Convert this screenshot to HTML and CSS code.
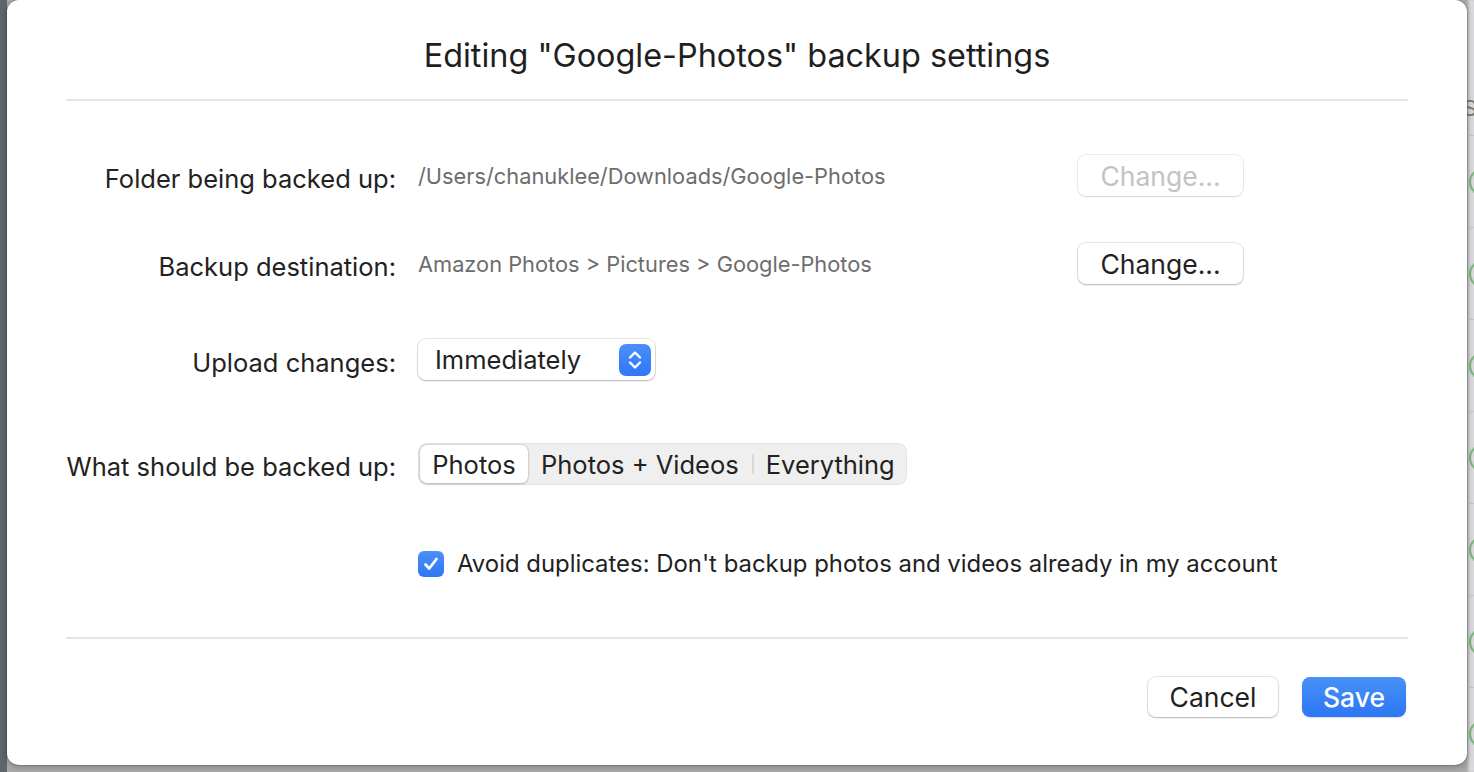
FILE: index.html
```html
<!DOCTYPE html>
<html lang="en">
<head>
    <meta charset="UTF-8">
    <title>Editing backup settings</title>
    <link rel="stylesheet" href="styles.css">
</head>
<body>
    <div class="desk">
        <div class="side-left"></div>

        <div class="sheet">
            <div class="sheet-head">
                <h1>Editing "Google-Photos" backup settings</h1>
            </div>

            <div class="form">
                <div class="row row-folder">
                    <div class="label">Folder being backed up:</div>
                    <div class="value">/Users/chanuklee/Downloads/Google-Photos</div>
                    <button class="btn btn-disabled">Change...</button>
                </div>

                <div class="row row-dest">
                    <div class="label">Backup destination:</div>
                    <div class="value">Amazon Photos &gt; Pictures &gt; Google-Photos</div>
                    <button class="btn">Change...</button>
                </div>

                <div class="row row-upload">
                    <div class="label">Upload changes:</div>
                    <div class="field">
                        <div class="popup">
                            <span>Immediately</span>
                            <span class="stepper">
                                <svg width="20" height="24" viewBox="0 0 20 24">
                                    <path d="M5 9.5 L10 4.5 L15 9.5" fill="none" stroke="#fff" stroke-width="2.4" stroke-linecap="round" stroke-linejoin="round"/>
                                    <path d="M5 14.5 L10 19.5 L15 14.5" fill="none" stroke="#fff" stroke-width="2.4" stroke-linecap="round" stroke-linejoin="round"/>
                                </svg>
                            </span>
                        </div>
                    </div>
                </div>

                <div class="row row-what">
                    <div class="label">What should be backed up:</div>
                    <div class="field">
                        <div class="segmented">
                            <span class="seg seg-on">Photos</span>
                            <span class="seg">Photos + Videos</span>
                            <span class="seg-sep"></span>
                            <span class="seg seg-last">Everything</span>
                        </div>
                    </div>
                </div>

                <div class="row row-check">
                    <div class="label"></div>
                    <label class="check">
                        <span class="box">
                            <svg width="18" height="18" viewBox="0 0 18 18">
                                <path d="M3.5 9.5 L7.2 13.5 L14.5 4" fill="none" stroke="#fff" stroke-width="2.8" stroke-linecap="round" stroke-linejoin="round"/>
                            </svg>
                        </span>
                        <span>Avoid duplicates: Don't backup photos and videos already in my account</span>
                    </label>
                </div>
            </div>

            <div class="sheet-foot">
                <button class="btn btn-cancel">Cancel</button>
                <button class="btn btn-save">Save</button>
            </div>
        </div>

        <!-- window behind the sheet, mostly hidden -->
        <div class="side-right">
            <div class="behind-top"><span>S</span></div>
            <div class="behind-row"><span class="ring"></span></div>
            <div class="behind-row"><span class="ring"></span></div>
            <div class="behind-row"><span class="ring"></span></div>
            <div class="behind-row"><span class="ring"></span></div>
            <div class="behind-row"><span class="ring"></span></div>
            <div class="behind-row"><span class="ring"></span></div>
            <div class="behind-row"><span class="ring"></span></div>
        </div>
    </div>
</body>
</html>
```

FILE: styles.css
```css
* {
    box-sizing: border-box;
}
body {
    margin: 0;
    font-family: Inter, "Noto Sans", "Liberation Sans", sans-serif;
    color: #222;
    background: #a9a9a9;
    overflow: hidden;
}
.desk {
    display: flex;
    width: 1474px;
    height: 772px;
    align-items: flex-start;
}
.side-left {
    width: 7px;
    height: 772px;
    background: #5e656e;
    flex-shrink: 0;
}
.side-right {
    width: 7px;
    height: 772px;
    flex-shrink: 0;
    overflow: hidden;
    background: #d9d9db;
    box-shadow: inset 2px 0 2px rgba(0,0,0,0.15);
}
.behind-top {
    height: 136px;
    padding-top: 94px;
    font-size: 22px;
    line-height: 28px;
    color: #777;
    white-space: nowrap;
    border-bottom: 1px solid #c4c4c6;
}
.behind-top span {
    margin-left: -4px;
}
.behind-row {
    height: 92px;
    display: flex;
    align-items: center;
    border-bottom: 1px solid #c4c4c6;
}
.ring {
    width: 28px;
    height: 28px;
    flex-shrink: 0;
    margin-left: 2px;
    border: 2px solid #79b77a;
    border-radius: 50%;
}

.sheet {
    width: 1460px;
    height: 765px;
    flex-shrink: 0;
    background: #fff;
    border-radius: 12px;
    box-shadow: 0 0 0 1px rgba(0,0,0,0.12), 0 2px 6px rgba(0,0,0,0.25);
    display: flex;
    flex-direction: column;
    position: relative;
    z-index: 1;
}
.sheet-head {
    margin: 0 59px;
    height: 101px;
    border-bottom: 2px solid #e4e4e4;
    display: flex;
    justify-content: center;
    padding-top: 35px;
}
.sheet-head h1 {
    margin: 0;
    font-size: 32.4px;
    font-weight: 400;
    line-height: 42px;
    color: #1f1f1f;
}

.form {
    padding-top: 54px;
    display: flex;
    flex-direction: column;
}
.row {
    display: grid;
    grid-template-columns: 389px 638px 165px;
    column-gap: 22px;
    align-items: center;
    height: 41px;
}
.row-dest { margin-top: 47px; }
.row-upload { margin-top: 55px; }
.row-what { margin-top: 63px; height: 42px; }
.row-check { margin-top: 64px; height: 28px; }

.label {
    text-align: right;
    font-size: 25.5px;
    padding-top: 5px;
    color: #222;
    white-space: nowrap;
}
.value {
    font-size: 21.8px;
    color: #6d6d6d;
    white-space: nowrap;
}

.btn {
    font-family: inherit;
    font-size: 26.5px;
    color: #222;
    background: #fff;
    border: none;
    border-radius: 8px;
    height: 41px;
    padding: 0;
    box-shadow: 0 0 0 1px rgba(0,0,0,0.09), 0 1px 2px rgba(0,0,0,0.22);
}
.btn-disabled {
    color: #c3c3c3;
    box-shadow: 0 0 0 1px rgba(0,0,0,0.07), 0 1px 2px rgba(0,0,0,0.1);
}

.popup {
    width: 237px;
    height: 41px;
    border-radius: 8px;
    background: #fff;
    box-shadow: 0 0 0 1px rgba(0,0,0,0.09), 0 1px 2px rgba(0,0,0,0.22);
    display: flex;
    align-items: center;
    justify-content: space-between;
    padding: 0 4px 0 17px;
    font-size: 25.5px;
}
.stepper {
    width: 32px;
    height: 32px;
    border-radius: 7px;
    background: linear-gradient(#4b8ff8, #2e77f5);
    display: flex;
    align-items: center;
    justify-content: center;
}

.segmented {
    display: inline-flex;
    align-items: center;
    height: 42px;
    padding: 2px;
    background: #efefef;
    border-radius: 9px;
    box-shadow: inset 0 0 0 1px rgba(0,0,0,0.05);
    font-size: 25.5px;
}
.seg {
    height: 38px;
    display: flex;
    align-items: center;
    padding: 0 13px;
    color: #222;
}
.seg-last {
    padding: 0 10px 0 12px;
}
.seg-on {
    width: 108px;
    justify-content: center;
    padding: 0;
    background: #fff;
    border-radius: 7px;
    box-shadow: 0 0 0 1px rgba(0,0,0,0.07), 0 1px 3px rgba(0,0,0,0.18);
}
.seg-sep {
    width: 2px;
    height: 20px;
    background: #d8d8d8;
}

.check {
    display: flex;
    align-items: center;
    gap: 13px;
    font-size: 23.9px;
    white-space: nowrap;
    grid-column: 2 / 4;
}
.box {
    width: 26px;
    height: 26px;
    border-radius: 6px;
    background: linear-gradient(#4b8ff8, #2e77f5);
    display: flex;
    align-items: center;
    justify-content: center;
    flex-shrink: 0;
}

.sheet-foot {
    margin: 60px 59px 0;
    border-top: 2px solid #e4e4e4;
    padding-top: 38px;
    padding-right: 2px;
    display: flex;
    justify-content: flex-end;
    gap: 24px;
}
.btn-cancel {
    width: 130px;
    height: 40px;
}
.btn-save {
    width: 104px;
    height: 40px;
    color: #fff;
    font-weight: 500;
    background: linear-gradient(#4891f8, #2c76f5);
    box-shadow: 0 1px 2px rgba(0,0,0,0.15);
}
```
